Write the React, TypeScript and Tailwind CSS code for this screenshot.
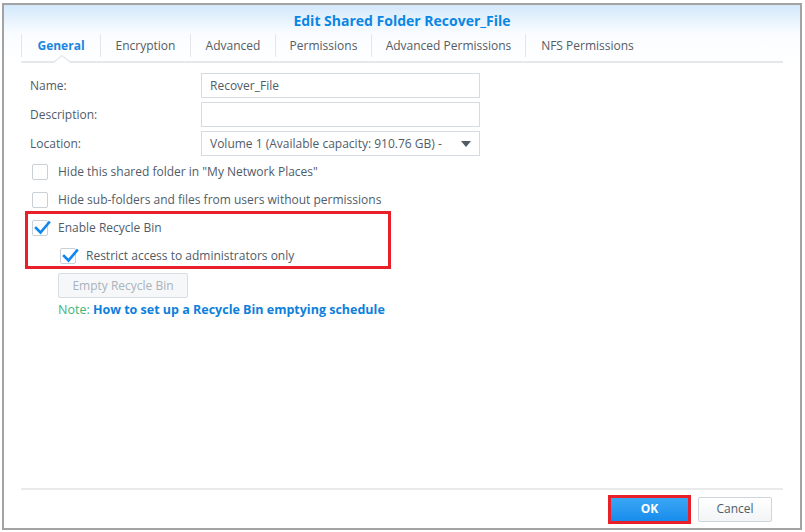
import React from 'react';

const font = { fontFamily: '"Open Sans", "Noto Sans", Arial, sans-serif' };

const tabs = [
  { label: 'General', w: 'w-[79px]', active: true },
  { label: 'Encryption', w: 'w-[90px]' },
  { label: 'Advanced', w: 'w-[85px]' },
  { label: 'Permissions', w: 'w-[96px]' },
  { label: 'Advanced Permissions', w: 'w-[154px]' },
  { label: 'NFS Permissions', w: 'w-[124px]' },
];

const Check = ({ checked }: { checked?: boolean }) => (
  <div className="relative w-[16px] h-[16px] border border-[#c9d0d6] bg-white rounded-[2px] shrink-0">
    {checked && (
      <svg className="absolute left-[1px] top-[-1px]" width="17" height="15" viewBox="0 0 17 15">
        <path d="M2 8 L6.5 12.5 L15 2.5" fill="none" stroke="#0e86f0" strokeWidth="2.6" strokeLinecap="square" />
      </svg>
    )}
  </div>
);

const CheckRow = ({ label, checked, className }: { label: string; checked?: boolean; className?: string }) => (
  <div className={'flex items-center gap-[10px] h-[28px] shrink-0 ' + (className || '')}>
    <Check checked={checked} />
    <span className="text-[12px] text-[#505c68]">{label}</span>
  </div>
);

const Field = ({ label, value, select }: { label: string; value?: string; select?: boolean }) => (
  <div className="flex items-center h-[25px]">
    <span className="w-[171px] text-[12px] text-[#505c68]">{label}</span>
    <div className="w-[279px] h-[25px] border border-[#d5dbe1] bg-white flex items-center pl-[8px] pr-[8px] text-[12px] text-[#505c68]">
      <span className="flex-1 whitespace-nowrap overflow-hidden">{value}</span>
      {select && (
        <svg width="10" height="6" viewBox="0 0 10 6" className="ml-[6px]">
          <path d="M0 0 L10 0 L5 6 Z" fill="#4f5b66" />
        </svg>
      )}
    </div>
  </div>
);

export default function App() {
  return (
    <div className="w-[805px] h-[532px] bg-white pl-[2px] pt-[3px]" style={font}>
      <div className="w-[800px] h-[527px] border-2 border-[#a3a3a3] flex flex-col bg-white">
        <div className="h-[28px] bg-gradient-to-b from-[#d3e8fb] to-[#f9fcff] flex items-center justify-center pt-[2px]">
          <span className="text-[14px] font-bold text-[#0a86e4]">Edit Shared Folder Recover_File</span>
        </div>
        <div className="bg-gradient-to-b from-[#f9fcff] to-white">
          <div className="relative mx-[17px] h-[30px] border-b-2 border-[#e6e9ec] flex">
            {tabs.map(t => (
              <div
                key={t.label}
                className={
                  t.w +
                  ' h-[23px] mt-[1px] border-l border-[#e3e6e9] last:border-r flex items-center justify-center text-[12px] ' +
                  (t.active ? 'font-bold text-[#1a86e0]' : 'text-[#555c63]')
                }
              >
                {t.label}
              </div>
            ))}
            <svg className="absolute left-[33px] bottom-[-2px]" width="16" height="8" viewBox="0 0 16 8">
              <path d="M0 8 L8 0 L16 8 Z" fill="#ffffff" />
              <path d="M0 7 L8 0.5 L16 7" fill="none" stroke="#e3e6e9" strokeWidth="1.2" />
            </svg>
          </div>
        </div>

        <div className="flex-1 flex flex-col pl-[26px] pt-[10px]">
          <div className="flex flex-col gap-[4px]">
            <Field label="Name:" value="Recover_File" />
            <Field label="Description:" />
            <Field label="Location:" value="Volume 1 (Available capacity: 910.76 GB) -" select />
          </div>
          <div className="flex flex-col mt-[2px] pl-[2px]">
            <CheckRow label={'Hide this shared folder in "My Network Places"'} />
            <CheckRow label="Hide sub-folders and files from users without permissions" />
          </div>
          <div className="w-[366px] h-[58px] mt-[-3px] border-[3px] border-[#e8202a] ml-[-5px] pl-[4px] flex flex-col">
            <CheckRow label="Enable Recycle Bin" checked />
            <CheckRow label="Restrict access to administrators only" checked className="pl-[28px]" />
          </div>
          <div className="pl-[28px] mt-[4px] flex flex-col">
            <div className="w-[130px] h-[25px] border border-[#d8dde2] bg-[#f5f7f9] rounded-[2px] flex items-center justify-center text-[12px] text-[#aab3bb]">
              Empty Recycle Bin
            </div>
            <div className="mt-[3px] text-[12.5px] whitespace-nowrap">
              <span className="text-[#3db67a]">Note: </span>
              <span className="font-bold text-[#0d80dc]">How to set up a Recycle Bin emptying schedule</span>
            </div>
          </div>
        </div>
        <div className="mx-[17px] border-t-2 border-[#e8eaec]" />
        <div className="h-[38px] flex items-center justify-end pr-[28px] gap-[7px]">
          <div className="w-[83px] h-[29px] border-[3px] border-[#e8202a] flex">
            <div className="flex-1 bg-gradient-to-b from-[#3aa7f5] to-[#168cec] flex items-center justify-center text-[12px] font-bold text-white">
              OK
            </div>
          </div>
          <div className="w-[74px] h-[25px] border border-[#cfd5db] rounded-[2px] bg-gradient-to-b from-white to-[#f2f4f6] flex items-center justify-center text-[12px] text-[#505c68]">
            Cancel
          </div>
        </div>
      </div>
    </div>
  );
}
